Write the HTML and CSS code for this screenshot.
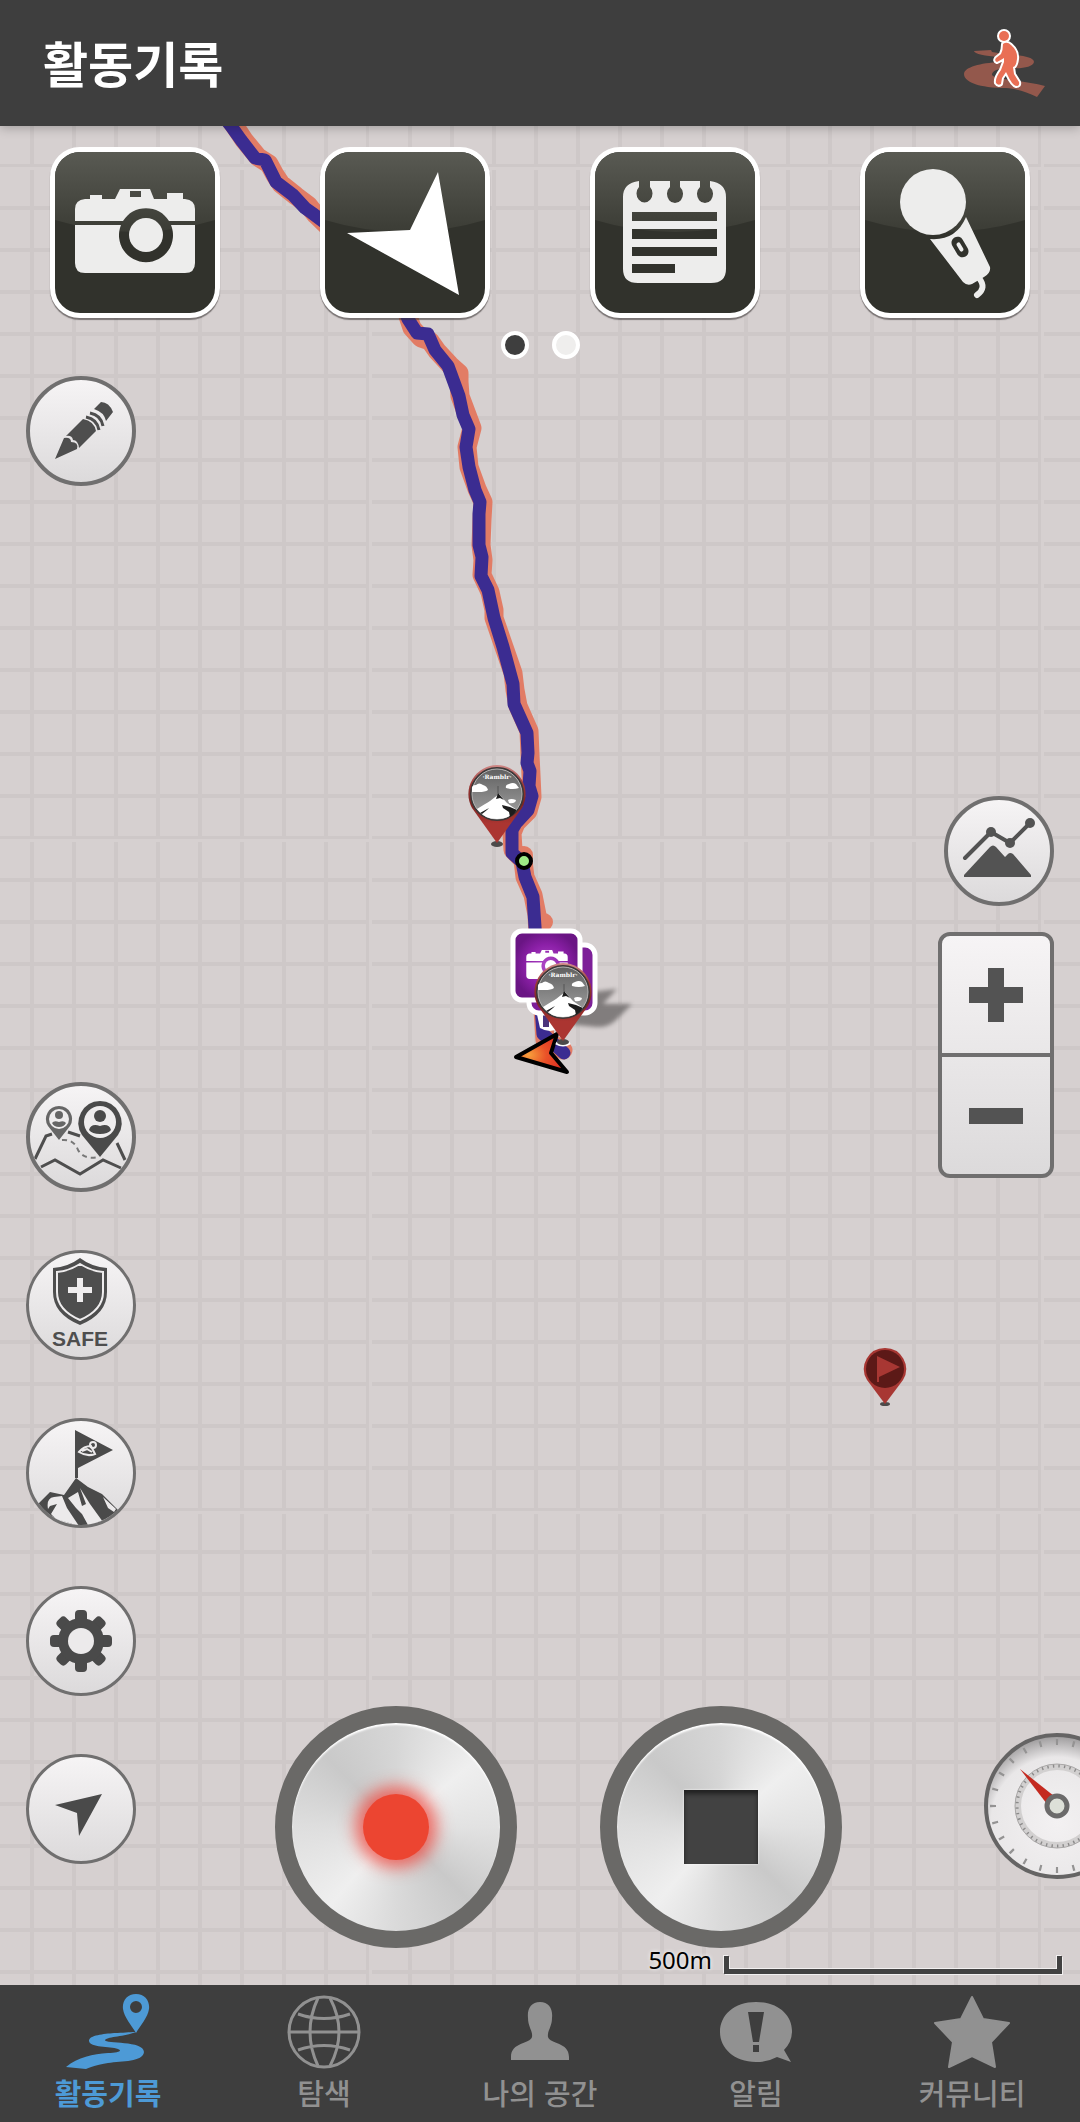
FILE: index.html
```html
<!DOCTYPE html>
<html lang="ko">
<head>
<meta charset="utf-8">
<meta name="viewport" content="width=device-width, initial-scale=1">
<title>활동기록</title>
<link rel="stylesheet" href="styles.css">
</head>
<body>
<svg class="defs" aria-hidden="true">
  <defs>
    <linearGradient id="gloss-fill" x1="0" y1="0" x2="0" y2="1">
      <stop offset="0" stop-color="#595a53"/><stop offset="1" stop-color="#3b3c35"/>
    </linearGradient>
    <linearGradient id="pin-photo" x1="0" y1="0" x2="0" y2="1">
      <stop offset="0" stop-color="#5f5f5f"/><stop offset="1" stop-color="#a5a5a5"/>
    </linearGradient>
    <linearGradient id="pin-red" x1="0" y1="0" x2="0" y2="1">
      <stop offset="0" stop-color="#d08a88"/><stop offset=".25" stop-color="#9c3a37"/><stop offset=".5" stop-color="#7c2523"/><stop offset=".75" stop-color="#ab3531"/>
    </linearGradient>
    <radialGradient id="marker-purple">
      <stop offset="0" stop-color="#b04ac8"/><stop offset=".6" stop-color="#8c20a8"/><stop offset="1" stop-color="#6a1584"/>
    </radialGradient>
    <radialGradient id="cursor-fill" cx=".25" cy=".55" r=".7">
      <stop offset="0" stop-color="#f7a03c"/><stop offset=".5" stop-color="#ea5128"/><stop offset="1" stop-color="#dd2f22"/>
    </radialGradient>
    <radialGradient id="gauge-face" cx=".5" cy=".62" r=".62">
      <stop offset="0" stop-color="#f3f1f2"/><stop offset=".75" stop-color="#e9e7e8"/><stop offset="1" stop-color="#9a9899"/>
    </radialGradient>
    <symbol id="gloss" viewBox="0 0 160 161">
      <path fill="url(#gloss-fill)" d="M0 0H160V68Q80 92 0 68Z"/>
    </symbol>
    <symbol id="peak-pin" viewBox="0 0 64 86" overflow="visible">
      <ellipse cx="32" cy="82" rx="6" ry="3" fill="#4c4a4a"/>
      <path fill="url(#pin-red)" d="M32 3A29 29 0 0 1 57 46L32 81L7 46A29 29 0 0 1 32 3Z"/>
      <circle cx="32" cy="32" r="26" fill="url(#pin-photo)" stroke="#3c3838" stroke-width="2"/>
      <circle cx="32" cy="32" r="25" fill="none" stroke="#b4b4b4" stroke-width="1"/>
      <g fill="#fff">
        <path d="M7 28Q6 23 11 23Q14 20 18 23Q22 24 23 28Q20 30 14 30H7Z"/>
        <path d="M41 26Q40 23 44 22Q48 20 51 22L54 26Q48 28 41 26Z"/>
        <path d="M43 38Q46 36 51 38Q50 42 44 41Z"/>
        <path d="M12 47Q20 42 25 39L34 32L42 41L52 48Q44 57 32 57Q19 57 12 47Z"/>
      </g>
      <path fill="#1c1c1c" d="M31 37L33 31L39 38L35 36ZM15 51L24 46L22 48L17 52ZM37 43L45 45L52 48Q49 53 45 55L44 50L38 46Z"/>
      <path stroke="#555" d="M33 24V31"/>
      <text x="32" y="17" class="pin-text" text-anchor="middle">·Ramblr·</text>
    </symbol>
    <symbol id="camera" viewBox="0 0 120 84">
      <path d="M10 10H15V6H27V10H40L45 0H75L79 10H92V4H108V10H110Q120 11 120 20V32H94A27 27 0 0 0 48 32H0V20Q0 11 10 10ZM0 36H46A27 27 0 1 0 96 36H120V74Q120 84 110 84H10Q0 84 0 74ZM55 2V8H66V2Z" fill-rule="evenodd"/>
      <ellipse cx="71" cy="46" rx="17" ry="17"/>
    </symbol>
  </defs>
</svg>

<header class="topbar">
  <h1 class="title">활동기록</h1>
  <button class="activity" type="button" aria-label="걷기">
    <svg width="82" height="70" viewBox="0 0 82 70">
      <path fill="#93584c" d="M10 23L27 22L28 24C45 27 70 27 70 34C69 39 58 41 47 40C33 40 28 43 28 47C31 52 60 52 81 58L73 69C62 64 54 61 42 60C15 60 0 54 0 46C0 39 17 35 35 34C45 33 45 31 34 29C22 28 10 26 10 23Z"/>
      <g fill="#fff" stroke="#fff" stroke-width="4" stroke-linejoin="round">
        <circle cx="40" cy="8" r="5"/>
        <path id="walker" d="M39 16Q43 13 47 17Q54 23 53 31Q52 39 49 39L50 46L55 54Q56 58 52 58Q48 57 43 46L42 44L38 50L37 56Q34 58 32 55Q31 50 37 42L40 34V30Q37 32 33 34Q30 33 32 30L37 26Q39 22 39 16Z"/>
      </g>
      <g fill="#e96f55">
        <circle cx="40" cy="8" r="5"/>
        <use href="#walker"/>
      </g>
    </svg>
  </button>
</header>

<main class="map">
  <svg class="map-layer" viewBox="0 126 1080 1859" preserveAspectRatio="xMidYMin slice" aria-label="이동 경로 지도">
    <g fill="none" stroke-linejoin="round" stroke-linecap="round">
      <path stroke="#e27c65" stroke-width="19" d="M226 114L236 128L244 140L258 157L269 164L275 175L281 184L296 196L308 205L316 215L404 300L408 316L412 328L421 338L430 341L437 351L450 365L459 373L459 382L460 396L466 412L472 428L467 447L469 467L477 489L483 502L482 520L481 545L483 560L482 575L490 592L494 610L494 618L504 647L513 673L515 690L518 706L529 731L530 755L531 775L532 797L528 811L516 823L512 833L513 850L523 860L525 877L533 895L537 915L538 935L545 1040L563 1050"/>
      <path stroke="#e27c65" stroke-width="18" d="M524 855V857M544 922V922"/>
      <path stroke="#3b2c91" stroke-width="13" d="M220 112L231 126L241 140L255 158L265 160L270 170L276 182L293 195L305 208L312 213L324 222L400 300L408 319L417 333L428 334L435 350L448 366L459 396L463 415L469 429L466 447L469 467L475 490L480 502L479 514L479 545L482 557L481 576L488 590L494 618L503 647L513 684L514 704L527 733L528 753L527 763L530 771L529 786L532 796L528 810L516 823L512 830L512 853L522 862L525 877L533 897L535 927L543 1034L564 1053"/>
    </g>
    <circle cx="524" cy="861" r="7" fill="#9eea86" stroke="#000" stroke-width="4"/>
    <use href="#peak-pin" x="465" y="762" width="64" height="86"/>
    <path class="marker-shadow" fill="#6d6969" opacity=".8" d="M592 992L617 989L603 1004L632 1004L616 1020Q608 1028 596 1027L566 1024Z"/>
    <path fill="#fff" d="M536 1010H560V1028Q550 1034 540 1028Z"/>
    <path fill="#4b347c" d="M543 1014H549V1027H543Z"/>
    <rect x="529" y="945" width="66" height="68" rx="10" fill="#7d1f98" stroke="#fff" stroke-width="5"/>
    <rect x="513" y="931" width="67" height="69" rx="9" fill="url(#marker-purple)" stroke="#fff" stroke-width="5"/>
    <use href="#camera" x="526" y="950" width="42" height="29" fill="#fff"/>
    <path fill="url(#cursor-fill)" stroke="#000" stroke-width="4" stroke-linejoin="round" d="M516 1057L557 1034L551 1053L567 1072Z"/>
    <path stroke="#fff" stroke-width="3" d="M556 1043Q563 1047 570 1043" fill="none"/>
    <use href="#peak-pin" x="531" y="960" width="64" height="86"/>
    <ellipse cx="885" cy="1404" rx="5" ry="2" fill="#4c4a4a"/>
    <path fill="#a83733" d="M885 1348A21 21 0 0 1 903 1380L885 1404L867 1380A21 21 0 0 1 885 1348Z"/>
    <circle cx="885" cy="1369" r="19" fill="#5c1917"/>
    <path fill="#a83733" d="M877 1356L900 1367L879 1377V1382H877Z"/>
  </svg>

  <div class="controls">
    <div class="quick">
      <button class="tile" type="button" aria-label="사진">
        <svg class="tile-gloss"><use href="#gloss"/></svg>
        <svg class="tile-icon" viewBox="5 5 160 161"><use href="#camera" x="25" y="42" width="120" height="84" fill="#ededec"/></svg>
      </button>
      <button class="tile" type="button" aria-label="방향">
        <svg class="tile-gloss"><use href="#gloss"/></svg>
        <svg class="tile-icon" viewBox="5 5 160 161"><path fill="#fff" d="M118 25L139 148L27 86L90 83Z"/></svg>
      </button>
      <button class="tile" type="button" aria-label="메모">
        <svg class="tile-gloss"><use href="#gloss"/></svg>
        <svg class="tile-icon" viewBox="5 5 160 161"><path fill="#ededec" fill-rule="evenodd" d="M49 34V40A8 9 0 1 0 60 40V34H80V40A8 9 0 1 0 90 40V34H110V40A8 9 0 1 0 120 40V34Q136 36 136 50V122Q136 136 121 136H48Q33 136 33 122V50Q33 36 49 34ZM42 65V74H127V65ZM42 82V92H127V82ZM42 100V109H127V100ZM42 117V126H85V117Z"/></svg>
      </button>
      <button class="tile" type="button" aria-label="음성 녹음">
        <svg class="tile-gloss"><use href="#gloss"/></svg>
        <svg class="tile-icon" viewBox="5 5 160 161">
          <circle cx="73" cy="55" r="33" fill="#ededec"/>
          <path fill="#ededec" d="M106 70L130 120Q131 126 124 130L112 137Q107 139 103 135L70 92Q96 94 106 70Z"/>
          <path fill="none" stroke="#ededec" stroke-width="6" stroke-linecap="round" d="M119 131Q127 141 117 148"/>
          <g transform="rotate(-30 100 100)"><rect x="94" y="89" width="12" height="22" rx="6" fill="#31322c"/><rect x="98" y="95" width="4" height="10" rx="2" fill="#ededec"/></g>
        </svg>
      </button>
    </div>
    <div class="pager" aria-label="페이지 1 / 2"><span class="dot dot-on"></span><span class="dot"></span></div>

    <div class="stage">
      <div class="rail rail-left">
        <button class="round" type="button" aria-label="그리기">
          <svg viewBox="0 0 110 110" fill="#4e4e4e">
            <path d="M29 83L38 62Q45 61 45 66Q53 66 51 73ZM40 60L57 43Q68 45 70 55L53 72Q52 64 47 64Q46 59 40 60ZM68 33L75 26Q83 26 87 36L80 45Q78 36 68 33Z"/>
            <path fill="none" stroke="#4e4e4e" stroke-width="3" d="M60 41Q71 43 73 54M64 37Q75 39 77 50"/>
          </svg>
        </button>
        <div class="rail-group">
          <button class="round" type="button" aria-label="친구 위치">
            <svg viewBox="0 0 110 110">
              <path fill="none" stroke="#4e4e4e" stroke-width="3" d="M9 77L20 54L26 52M42 50L54 54M91 61L99 78M15 85L29 78L54 92L77 78L95 86"/>
              <path fill="none" stroke="#777" stroke-width="2" stroke-dasharray="5 4" d="M36 58Q48 57 52 68Q58 78 72 75"/>
              <g fill="#666"><path d="M33 24A13 13 0 0 1 44 44L33 58L22 44A13 13 0 0 1 33 24Z"/><circle cx="33" cy="37" r="10" fill="#efedee"/><circle cx="33" cy="33" r="4"/><path d="M26 41Q28 38 33 40Q38 38 40 41Q38 45 33 45Q28 45 26 41Z"/></g>
              <g fill="#4a4a4a"><path d="M74 19A22 22 0 0 1 92 53L74 75L56 53A22 22 0 0 1 74 19Z"/><circle cx="74" cy="40" r="16" fill="#efedee"/><circle cx="74" cy="34" r="6"/><path d="M63 48Q65 41 74 44Q83 41 85 48Q82 52 74 52Q66 52 63 48Z"/></g>
            </svg>
          </button>
          <button class="round round-thin" type="button" aria-label="SAFE">
            <svg viewBox="0 0 110 110">
              <path fill="#4e4e4e" d="M54 8Q66 17 81 18V42Q81 64 54 75Q27 64 27 42V18Q42 17 54 8Z"/>
              <path fill="none" stroke="#efedee" stroke-width="2" d="M54 14Q65 21 77 22V42Q77 60 54 70Q31 60 31 42V22Q43 21 54 14Z"/>
              <path fill="#efedee" d="M51 28H57V37H66V43H57V52H51V43H42V37H51Z"/>
              <text x="54" y="96" class="safe-text" text-anchor="middle">SAFE</text>
            </svg>
          </button>
          <button class="round round-thin" type="button" aria-label="정상 인증">
            <svg viewBox="0 0 110 110">
              <path fill="#4a4a4a" d="M49 12L87 32L52 50V60H49ZM11 87L24 74L38 77L50 60L62 69L76 76L92 92Q84 102 74 104L66 107L52 108L32 101L20 96Z"/>
              <path fill="#eceaeb" d="M22 91Q20 80 28 79L36 78L41 90L53 108L30 101L25 96L31 86L24 88ZM42 80L52 74L56 88L60 86L54 70L64 86L77 104L62 107L56 96L50 90ZM77 79L90 91L88 94L82 90Z"/>
              <g fill="none" stroke="#eceaeb" stroke-width="2"><path d="M53 34Q58 28 65 28L69 36Q61 39 53 34ZM56 33L61 31L66 34"/><circle cx="67" cy="27" r="3"/></g>
            </svg>
          </button>
          <button class="round round-thin" type="button" aria-label="설정">
            <svg viewBox="0 0 110 110">
              <g fill="#4a4a4a">
                <g id="teeth"><rect x="49" y="24" width="12" height="62" rx="4"/><rect x="24" y="49" width="62" height="12" rx="4"/></g>
                <use href="#teeth" transform="rotate(45 55 55)"/>
                <circle cx="55" cy="55" r="23"/>
              </g>
              <circle cx="55" cy="55" r="13" fill="#eceaeb"/>
            </svg>
          </button>
          <button class="round round-thin" type="button" aria-label="현재 위치">
            <svg viewBox="0 0 110 110"><path fill="#4a4a4a" d="M76 40L53 82L51 59L29 51Z"/></svg>
          </button>
        </div>
      </div>

      <div class="recorder">
        <button class="knob" type="button" aria-label="기록 시작"><span class="knob-record"></span></button>
        <button class="knob" type="button" aria-label="기록 정지"><span class="knob-stop"></span></button>
      </div>

      <div class="rail rail-right">
        <div class="view-tools">
          <button class="round" type="button" aria-label="고도 그래프">
            <svg viewBox="0 0 110 110" fill="#535353">
              <path fill="none" stroke="#535353" stroke-width="4" stroke-linecap="round" stroke-linejoin="round" d="M21 62L47 36L66 47L86 27"/>
              <circle cx="47" cy="36" r="5"/><circle cx="66" cy="47" r="5"/><circle cx="86" cy="27" r="5"/>
              <path d="M20 81V79L46 51Q49 48 52 51L61 61L64 58Q66 56 69 58L87 79V81Z"/>
            </svg>
          </button>
          <div class="zoom">
            <button class="zoom-btn" type="button" aria-label="확대"><svg width="54" height="54" viewBox="0 0 54 54"><path fill="#535353" d="M19 0H35V19H54V35H35V54H19V35H0V19H19Z"/></svg></button>
            <button class="zoom-btn" type="button" aria-label="축소"><svg width="54" height="54" viewBox="0 0 54 54"><path fill="#535353" d="M0 19H54V35H0Z"/></svg></button>
          </div>
        </div>
        <button class="gauge" type="button" aria-label="계기판">
          <svg width="148" height="148" viewBox="0 0 148 148">
            <circle cx="74" cy="74" r="71" fill="url(#gauge-face)" stroke="#656464" stroke-width="4"/>
            <circle cx="74" cy="74" r="64" fill="none" stroke="#949393" stroke-width="6" pathLength="360" stroke-dasharray="2 13" stroke-dashoffset="1"/>
            <circle cx="74" cy="74" r="39" fill="none" stroke="#d2d0d0" stroke-width="6"/>
            <circle cx="74" cy="74" r="42" fill="none" stroke="#aaa8a8"/>
            <circle cx="74" cy="74" r="40" fill="none" stroke="#8b8a8a" stroke-width="3" pathLength="360" stroke-dasharray="2 6"/>
            <path fill="#c42a20" d="M37 37L71 64L64 72Z"/>
            <circle cx="74" cy="74" r="10" fill="#dde0d8" stroke="#6b6a6a" stroke-width="5"/>
          </svg>
        </button>
      </div>
    </div>

    <div class="scale"><span class="scale-label">500m</span><span class="scale-bar"></span></div>
  </div>
</main>

<nav class="tabs">
  <a class="tab tab-active" href="#record" aria-current="page">
    <svg width="84" height="78" viewBox="0 0 84 78"><path fill-rule="evenodd" d="M70 2C79 2 84 9 83 17C82 25 74 34 70 41C66 34 58 25 57 17C56 9 61 2 70 2ZM70 9A6 6 0 1 0 70 21A6 6 0 1 0 70 9ZM70 40C58 45 43 44 39 48C38 52 78 48 78 60C77 70 56 69 42 71C30 73 25 75 20 77L0 75C12 65 27 62 42 61C52 61 57 59 52 57C44 54 24 56 23 49C23 43 38 42 48 41C58 41 62 40 70 40Z"/></svg>
    <span>활동기록</span>
  </a>
  <a class="tab" href="#explore">
    <svg width="84" height="78" viewBox="0 0 84 78"><g fill="none" stroke="currentColor" stroke-width="3"><circle cx="42" cy="40" r="35"/><path d="M7 40H77M16 22Q42 31 68 22M16 58Q42 49 68 58M36 6Q20 40 36 74M48 6Q66 40 48 74"/></g></svg>
    <span>탐색</span>
  </a>
  <a class="tab" href="#my">
    <svg width="84" height="78" viewBox="0 0 84 78"><path d="M42 10C51 10 55 17 54 26C54 35 49 39 50 45C52 52 71 50 71 65V68H13V65C13 50 32 52 34 45C35 39 30 35 30 26C29 17 33 10 42 10Z"/></svg>
    <span>나의 공간</span>
  </a>
  <a class="tab" href="#alerts">
    <svg width="84" height="78" viewBox="0 0 84 78"><path fill-rule="evenodd" d="M42 10C64 10 78 23 78 39Q78 50 70 58L77 70L63 65Q54 70 42 70C20 70 6 56 6 40C6 23 20 10 42 10ZM34 20L39 50H45L50 20ZM39 53V60H45V53Z"/></svg>
    <span>알림</span>
  </a>
  <a class="tab" href="#community">
    <svg width="84" height="78" viewBox="0 0 84 78"><path stroke="currentColor" stroke-width="2" stroke-linejoin="round" d="M42 5L53 27L79 31L61 50L65 75L42 64L19 75L23 50L5 31L31 27Z"/></svg>
    <span>커뮤니티</span>
  </a>
</nav>
</body>
</html>
```
FILE: styles.css
```css
* {
  box-sizing: border-box;
}

body {
  margin: 0;
  min-height: 100vh;
  display: flex;
  flex-direction: column;
  background: #3e3e3e;
  font-family: "Noto Sans CJK KR", "Noto Sans", sans-serif;
}

button {
  padding: 0;
  border: 0;
  background: none;
  font: inherit;
  cursor: pointer;
}

svg {
  display: block;
}

.defs {
  position: absolute;
  width: 0;
  height: 0;
}

/* Top bar */
.topbar {
  position: relative;
  z-index: 1;
  display: flex;
  align-items: center;
  justify-content: space-between;
  height: 126px;
  padding: 0 34px 0 43px;
  background: #3e3e3e;
  box-shadow: 0 2px 10px rgba(0, 0, 0, .25);
}

.title {
  margin: 0;
  padding-bottom: 3px;
  color: #fff;
  font-size: 49px;
  line-height: 64px;
  font-weight: 700;
}

/* Map */
.map {
  position: relative;
  flex: 1;
  display: flex;
  overflow: hidden;
  background-color: #d6d0d0;
  background-image:
    linear-gradient(#d6d0d0 3px, transparent 3px),
    linear-gradient(90deg, #d6d0d0 3px, transparent 3px),
    linear-gradient(#cec8c8 4px, transparent 4px),
    linear-gradient(90deg, #cec8c8 4px, transparent 4px);
  background-size: 672px 672px, 672px 672px, 42px 42px, 42px 42px;
  background-position: 0 41px, 369px 0, 0 -4px, 30px 0;
}

.map-layer {
  position: absolute;
  inset: 0;
  width: 100%;
  height: 100%;
}

.pin-text {
  font: 700 6px "DejaVu Serif", serif;
  fill: #fff;
}

.marker-shadow {
  filter: blur(2px);
}

.controls {
  position: relative;
  flex: 1;
  display: flex;
  flex-direction: column;
}

.quick {
  display: flex;
  justify-content: space-between;
  padding: 21px 50px 0;
}

.tile {
  display: grid;
  width: 170px;
  height: 171px;
  border: 5px solid #fff;
  border-radius: 30px;
  background: #31322c;
  box-shadow: 0 2px 1px rgba(60, 55, 55, .6);
  overflow: hidden;
}

.tile-gloss,
.tile-icon {
  grid-area: 1 / 1;
  width: 160px;
  height: 161px;
}

.pager {
  display: flex;
  justify-content: center;
  gap: 23px;
  padding: 13px 0 17px;
}

.dot {
  width: 28px;
  height: 28px;
  border: 4px solid #fff;
  border-radius: 50%;
  background: #efeeed;
}

.dot-on {
  background: #3e3e3e;
}

.stage {
  flex: 1;
  display: grid;
  grid-template-columns: 136px 1fr 97px;
}

.rail {
  display: flex;
  flex-direction: column;
  justify-content: space-between;
}

.rail-left {
  padding: 0 0 84px 26px;
}

.rail-group {
  display: flex;
  flex-direction: column;
  gap: 58px;
}

.rail-right {
  align-items: flex-end;
  padding: 420px 0 68px;
}

.view-tools {
  display: flex;
  flex-direction: column;
  align-items: flex-end;
  gap: 26px;
  padding-right: 26px;
}

.round {
  display: grid;
  width: 110px;
  height: 110px;
  border: 4px solid #706f6f;
  border-radius: 50%;
  background: linear-gradient(#f6f4f5, #dcdadb);
  overflow: hidden;
}

.round svg {
  width: 110px;
  height: 110px;
  margin: -4px;
}

.round-thin {
  border-width: 3px;
}

.round-thin svg {
  margin: -3px;
}

.safe-text {
  font: 700 21px "Liberation Sans Narrow", "Liberation Sans", sans-serif;
  fill: #4e4e4e;
}

.zoom {
  display: flex;
  flex-direction: column;
  width: 116px;
  border: 4px solid #706f6f;
  border-radius: 12px;
  background: linear-gradient(#f6f4f5, #dcdadb);
}

.zoom-btn {
  display: grid;
  place-items: center;
  height: 117px;
}

.zoom-btn + .zoom-btn {
  height: 121px;
  border-top: 4px solid #706f6f;
}

.gauge {
  width: 97px;
  height: 148px;
  overflow: hidden;
}

/* Record and stop knobs */
.recorder {
  display: flex;
  align-items: flex-end;
  justify-content: center;
  gap: 83px;
  padding-right: 2px;
}

.knob {
  display: grid;
  place-items: center;
  width: 242px;
  height: 242px;
  border: 17px solid #6a6967;
  border-radius: 50%;
  background: conic-gradient(#d6d6d6, #efefef 50deg, #e2e2e2 90deg, #c9c9c9 135deg, #dadada 180deg, #efefef 220deg, #dedede 270deg, #c9c9c9 315deg, #d6d6d6);
  background-origin: border-box;
  box-shadow: inset 0 2px 2px #fff;
}

.knob-record {
  width: 66px;
  height: 66px;
  border-radius: 50%;
  background: #ec4531;
  box-shadow: 0 0 16px 8px rgba(240, 70, 60, .75);
}

.knob-stop {
  width: 74px;
  height: 74px;
  background: #424242;
  box-shadow: inset 0 4px 4px #222, 0 0 2px #fff;
}

/* Map scale */
.scale {
  display: flex;
  justify-content: flex-end;
  align-items: flex-start;
  gap: 12px;
  height: 37px;
  padding-right: 18px;
}

.scale-label {
  color: #000;
  font: 24px/24px "Noto Sans", sans-serif;
  text-shadow: 0 0 4px #fff;
}

.scale-bar {
  width: 338px;
  height: 18px;
  margin-top: 8px;
  border: 5px solid #424242;
  border-top: 0;
  filter: drop-shadow(1px 1px 0 #f2f0f0) drop-shadow(-1px -1px 0 #f2f0f0);
}

/* Bottom tabs */
.tabs {
  display: grid;
  grid-template-columns: repeat(5, 1fr);
  background: #3e3e3e;
}

.tab {
  display: flex;
  flex-direction: column;
  align-items: center;
  padding: 7px 0 8px;
  color: #919191;
  fill: currentColor;
  font-size: 29px;
  line-height: 44px;
  font-weight: 500;
  text-decoration: none;
}

.tab-active {
  color: #4d9ad6;
  font-weight: 700;
}
```
